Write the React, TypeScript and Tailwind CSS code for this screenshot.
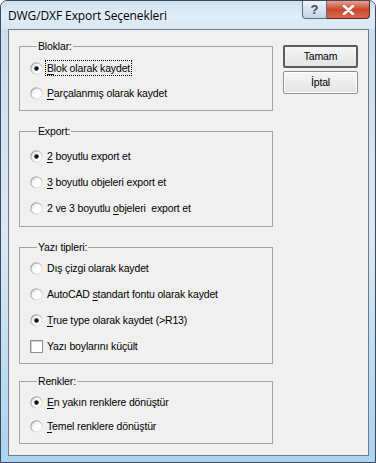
import React from "react";

const font = { fontFamily: '"Liberation Sans", Arial, sans-serif' };

function Radio({ checked }: { checked?: boolean }) {
  return (
    <svg width="13" height="13" viewBox="0 0 13 13" className="shrink-0">
      <defs>
        <linearGradient id="rgo" x1="0" y1="0" x2="1" y2="1">
          <stop offset="0" stopColor="#8c8c8c" />
          <stop offset="0.5" stopColor="#c8c8c8" />
          <stop offset="1" stopColor="#ffffff" />
        </linearGradient>
        <linearGradient id="rgi" x1="0" y1="0" x2="1" y2="1">
          <stop offset="0" stopColor="#d8d8d8" />
          <stop offset="0.45" stopColor="#ffffff" />
          <stop offset="1" stopColor="#ffffff" />
        </linearGradient>
      </defs>
      <circle cx="6.5" cy="6.5" r="6.2" fill="url(#rgo)" />
      <circle cx="6.5" cy="6.5" r="5" fill="url(#rgi)" />
      {checked && <circle cx="6.5" cy="6.5" r="2.2" fill="#111" />}
    </svg>
  );
}

const txt = "text-[10.5px] tracking-[-0.15px] leading-[14px] text-black whitespace-pre";

function Row({
  children,
  checked,
  box,
}: {
  children: React.ReactNode;
  checked?: boolean;
  box?: boolean;
}) {
  return (
    <div className="flex items-center h-[16px] gap-[4px]">
      {box ? (
        <span className="w-[13px] h-[13px] shrink-0 bg-white border border-[#8e8f8f] shadow-[inset_1px_1px_0_#d0d0d0]" />
      ) : (
        <Radio checked={checked} />
      )}
      <span className={txt}>{children}</span>
    </div>
  );
}

function Group({
  title,
  children,
  className,
}: {
  title: string;
  children: React.ReactNode;
  className?: string;
}) {
  return (
    <fieldset
      className={
        "border border-[#a3a3a3] pl-[10px] pr-2 m-0 min-w-0 " + (className || "")
      }
    >
      <legend className="ml-[7px] px-[1px] text-[10.5px] tracking-[-0.15px] leading-[13px] text-black">
        {title}
      </legend>
      {children}
    </fieldset>
  );
}

function U({ children }: { children: React.ReactNode }) {
  return <span className="underline underline-offset-[2px]">{children}</span>;
}

export default function App() {
  return (
    <div
      className="relative w-[376px] h-[463px] overflow-hidden rounded-t-[7px] border border-[#3d4a57] bg-gradient-to-b from-[#c9dcef] via-[#dbe8f5] to-[#a9d4f0] flex flex-col"
      style={font}
    >
      {/* title bar */}
      <div className="h-[28px] shrink-0 flex items-center pl-[7px] pt-[1px] bg-gradient-to-b from-[#cfe0f2] via-[#e2edf8] to-[#d6e6f5]">
        <span
          className="text-[12px] tracking-[-0.1px] text-black"
          style={{ fontFamily: '"Open Sans", "Noto Sans", sans-serif' }}
        >
          DWG/DXF Export Seçenekleri
        </span>
      </div>
      <div className="absolute top-0 right-[5px] flex">
        <div className="w-[25px] h-[18px] rounded-bl-[4px] border border-t-0 border-[#5f6e7e] bg-gradient-to-b from-[#eef3f9] via-[#d8e3ef] to-[#c3d3e4] flex items-center justify-center text-[#3c4a5a] text-[13px] font-bold leading-none">
          ?
        </div>
        <div className="w-[43px] h-[18px] rounded-br-[4px] border border-l-0 border-t-0 border-[#5a2a22] bg-gradient-to-b from-[#e8a08e] via-[#c8452e] to-[#d9694c] flex items-center justify-center">
          <svg width="13" height="10" viewBox="0 0 13 10">
            <path
              d="M2 1 L11 9 M11 1 L2 9"
              stroke="#ffffff"
              strokeWidth="2.6"
              strokeLinecap="round"
            />
          </svg>
        </div>
      </div>

      {/* client area */}
      <div className="ml-[7px] mr-[6px] h-[427px] shrink-0 border border-[#707a85] bg-[#f0f0f0] flex pl-[10px] pt-[10px]">
        <div className="w-[254px] flex flex-col">
          <Group title="Bloklar:" className="pt-[7px] pb-[9px]">
            <div className="flex flex-col gap-[9px]">
              <div className="flex items-center h-[16px] gap-[3px]">
                <Radio checked />
                <span className={txt + " outline outline-1 outline-dotted outline-black px-[1px]"}>
                  <U>B</U>lok olarak kaydet
                </span>
              </div>
              <Row>
                <U>P</U>arçalanmış olarak kaydet
              </Row>
            </div>
          </Group>

          <Group title="Export:" className="mt-[14px] pt-[10px] pb-[10px]">
            <div className="flex flex-col gap-[10px]">
              <Row checked>
                <U>2</U> boyutlu export et
              </Row>
              <Row>
                <U>3</U> boyutlu objeleri export et
              </Row>
              <Row>
                2 ve 3 boyutlu <U>o</U>bjeleri  export et
              </Row>
            </div>
          </Group>

          <Group title="Yazı tipleri:" className="mt-[14px] pt-[6px] pb-[9px]">
            <div className="flex flex-col gap-[10px]">
              <Row>Dış çizgi olarak kaydet</Row>
              <Row>
                AutoCAD <U>s</U>tandart fontu olarak kaydet
              </Row>
              <Row checked>
                <U>T</U>rue type olarak kaydet (&gt;R13)
              </Row>
              <Row box>Yazı boylarını küçült</Row>
            </div>
          </Group>

          <Group title="Renkler:" className="mt-[11px] pt-[6px] pb-[9px]">
            <div className="flex flex-col gap-[8px]">
              <Row checked>
                <U>E</U>n yakın renklere dönüştür
              </Row>
              <Row>
                <U>T</U>emel renklere dönüştür
              </Row>
            </div>
          </Group>
        </div>

        <div className="ml-[10px] mt-[5px] w-[75px] flex flex-col gap-[3px]">
          <button className="h-[23px] w-full border-2 border-[#5c5c5c] rounded-[2px] bg-gradient-to-b from-[#f6f6f6] to-[#e4e4e4] text-[10.5px] tracking-[-0.15px] text-black flex items-center justify-center">
            Tamam
          </button>
          <button className="h-[23px] w-full border border-[#8e8e8e] rounded-[2px] bg-gradient-to-b from-[#f6f6f6] to-[#e4e4e4] shadow-[inset_0_0_0_1px_#ffffff] text-[10.5px] tracking-[-0.15px] text-black flex items-center justify-center">
            İptal
          </button>
        </div>
      </div>
    </div>
  );
}
